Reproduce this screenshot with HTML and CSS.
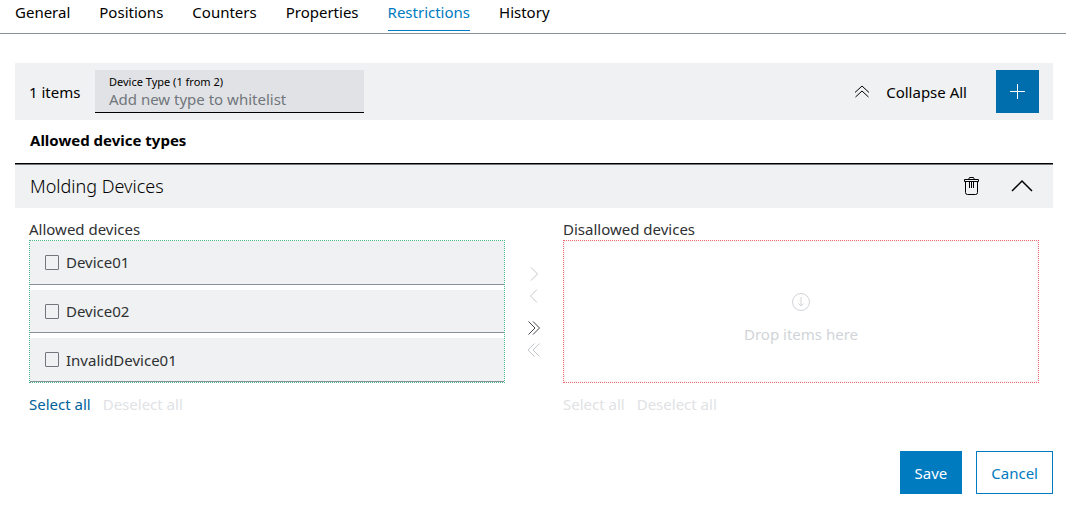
FILE: index.html
```html
<!DOCTYPE html>
<html lang="en">
  <head>
    <meta charset="UTF-8" />
    <meta name="viewport" content="width=device-width, initial-scale=1.0" />
    <title>Restrictions</title>
    <link rel="stylesheet" href="styles.css">
  </head>
  <body>
    <nav class="tabs">
      <a href="#general">General</a>
      <a href="#positions">Positions</a>
      <a href="#counters">Counters</a>
      <a href="#properties">Properties</a>
      <a href="#restrictions" class="active">Restrictions</a>
      <a href="#history">History</a>
    </nav>

    <main class="content">
      <div class="toolbar">
        <span class="count">1 items</span>
        <div class="field">
          <label for="device-type">Device Type (1 from 2)</label>
          <input type="text" id="device-type" placeholder="Add new type to whitelist" />
        </div>
        <button type="button" class="collapse-all">
          <svg width="16" height="16" viewBox="0 0 16 16"><path d="M1 8.5 8 2l7 6.5M1.5 13 8 7l6.5 6" /></svg>
          Collapse All
        </button>
        <button type="button" class="add" aria-label="Add">
          <svg width="15" height="15" viewBox="0 0 15 15"><path d="M7.5 0v15M0 7.5h15" /></svg>
        </button>
      </div>

      <h2 class="list-title">Allowed device types</h2>

      <section>
        <div class="group-header">
          <h3>Molding Devices</h3>
          <button type="button" aria-label="Delete">
            <svg width="16" height="20" viewBox="0 0 16 20"><path d="M.5 3.5h14v2H.5zM4.5 3.5l1-2h4l1 2M1.5 5.5v11q0 2 2 2h8q2 0 2-2v-11M5.5 6v6M7.5 6v6M9.5 6v6" /></svg>
          </button>
          <button type="button" aria-label="Collapse">
            <svg class="bold" width="24" height="14" viewBox="0 0 24 14"><path d="M2 12 12 2l10 10" /></svg>
          </button>
        </div>

        <div class="transfer">
          <div class="column">
            <h4>Allowed devices</h4>
            <ul class="box allowed">
              <li><label><input type="checkbox" /> Device01</label></li>
              <li><label><input type="checkbox" /> Device02</label></li>
              <li><label><input type="checkbox" /> InvalidDevice01</label></li>
            </ul>
            <div class="links">
              <button type="button">Select all</button>
              <button type="button" disabled>Deselect all</button>
            </div>
          </div>

          <div class="arrows">
            <button type="button" aria-label="Move right" disabled>
              <svg width="14" height="16" viewBox="0 0 14 16"><path d="M4 1.5 10.5 8 4 14.5" /></svg>
            </button>
            <button type="button" aria-label="Move left" disabled>
              <svg width="14" height="16" viewBox="0 0 14 16"><path d="M10 1.5 3.5 8l6.5 6.5" /></svg>
            </button>
            <button type="button" class="all" aria-label="Move all right">
              <svg width="14" height="16" viewBox="0 0 14 16"><path d="M1.5 1.5 8 8l-6.5 6.5M6 1.5 12.5 8 6 14.5" /></svg>
            </button>
            <button type="button" aria-label="Move all left" disabled>
              <svg width="14" height="16" viewBox="0 0 14 16"><path d="M7.5 1.5 1 8l6.5 6.5M12.5 1.5 6 8l6.5 6.5" /></svg>
            </button>
          </div>

          <div class="column">
            <h4>Disallowed devices</h4>
            <div class="box disallowed">
              <div class="drop">
                <svg width="20" height="20" viewBox="0 0 20 20"><circle cx="10" cy="10" r="8.5" /><path d="M10 5v9M7.5 11.5 10 14l2.5-2.5" /></svg>
                <span>Drop items here</span>
              </div>
            </div>
            <div class="links">
              <button type="button" disabled>Select all</button>
              <button type="button" disabled>Deselect all</button>
            </div>
          </div>
        </div>
      </section>

      <div class="actions">
        <button type="button" class="save">Save</button>
        <button type="button" class="cancel">Cancel</button>
      </div>
    </main>
  </body>
</html>
```
FILE: styles.css
```css
* {
  box-sizing: border-box;
}
body {
  margin: 0;
  font-family: "Noto Sans", sans-serif;
  font-size: 15px;
  line-height: 20px;
  color: #000;
  background: #fff;
}
h2,
h3,
h4,
ul {
  margin: 0;
  padding: 0;
}
button {
  font: inherit;
  color: inherit;
  background: none;
  border: none;
  padding: 0;
  cursor: pointer;
}
svg {
  display: block;
  fill: none;
  stroke: currentColor;
}
.tabs {
  display: flex;
  gap: 29px;
  height: 34px;
  padding: 2px 15px;
  border-bottom: 1px solid #8a9097;
}
.tabs a {
  color: #000;
  text-decoration: none;
  height: 29px;
}
.tabs a.active {
  color: #007bc0;
  border-bottom: 1px solid #007bc0;
}
.content {
  padding: 29px 13px 19px 15px;
}
.toolbar {
  display: flex;
  align-items: center;
  height: 57px;
  padding: 0 14px;
  background: #eff1f2;
}
.count {
  width: 66px;
}
.field {
  display: flex;
  flex-direction: column;
  width: 269px;
  height: 43px;
  padding: 5px 14px 0;
  background: #e0e2e5;
  border-bottom: 1px solid #000;
}
.field label {
  font-size: 11px;
  line-height: 14px;
}
.field input {
  width: 100%;
  height: 20px;
  padding: 0;
  border: none;
  outline: none;
  background: none;
  font: inherit;
}
.field input::placeholder {
  color: #71767c;
}
.collapse-all {
  display: flex;
  align-items: center;
  gap: 16px;
  margin-left: auto;
}
.add {
  display: grid;
  place-items: center;
  width: 43px;
  height: 43px;
  margin-left: 29px;
  color: #fff;
  background: #006ead;
}
.list-title {
  padding: 10px 15px 13px;
  font-size: 15px;
  font-weight: 700;
}
.group-header {
  display: flex;
  align-items: center;
  gap: 30px;
  height: 45px;
  padding: 0 19px 0 15px;
  background: #eff1f2;
  border-top: 1px solid #000;
  box-shadow: inset 0 1px #71767c;
}
.group-header h3 {
  flex: 1;
  font-size: 18px;
  font-weight: 300;
}
.bold {
  stroke-width: 1.5;
}
.transfer {
  display: grid;
  grid-template-columns: 1fr 58px 1fr;
  padding: 11px 14px 0;
}
.column {
  display: flex;
  flex-direction: column;
}
.column h4 {
  margin-bottom: 1px;
  font-size: 15px;
  font-weight: 400;
  color: #2e3033;
}
.box {
  height: 143px;
}
.allowed {
  display: flex;
  flex-direction: column;
  gap: 5px;
  list-style: none;
  border: 1px dotted #4cb587;
}
.allowed li {
  display: flex;
  flex: 1;
  background: #eff1f2;
  border-bottom: 1px solid #8a9097;
}
.allowed label {
  display: flex;
  flex: 1;
  align-items: center;
  gap: 7px;
  padding: 0 15px;
  color: #2e3033;
}
.allowed input {
  appearance: none;
  width: 14px;
  height: 15px;
  margin: 0;
  border: 1px solid #71767c;
  border-radius: 1px;
}
.allowed input:checked {
  background: #007bc0;
}
.disallowed {
  border: 1px dotted #f2666b;
}
.drop {
  display: flex;
  flex-direction: column;
  align-items: center;
  justify-content: center;
  gap: 12px;
  height: 100%;
  padding-top: 12px;
  color: #d0d4d8;
  border: 1px dashed #eff1f2;
}
.links {
  display: flex;
  gap: 12px;
  padding-top: 11px;
}
.links button {
  color: #00629a;
}
.links button:disabled {
  color: #e0e2e5;
}
.arrows {
  display: flex;
  flex-direction: column;
  align-items: center;
  gap: 6px;
  padding-top: 47px;
}
.arrows button {
  color: #43464a;
}
.arrows button:disabled {
  color: #c1c7cc;
}
.arrows .all {
  margin-top: 10px;
}
.actions {
  display: flex;
  justify-content: flex-end;
  gap: 14px;
  margin-top: 37px;
}
.actions button {
  height: 43px;
  padding: 0 14px;
  border: 1px solid #007bc0;
}
.actions .save {
  color: #fff;
  background: #007bc0;
}
.actions .cancel {
  color: #007bc0;
}
```
